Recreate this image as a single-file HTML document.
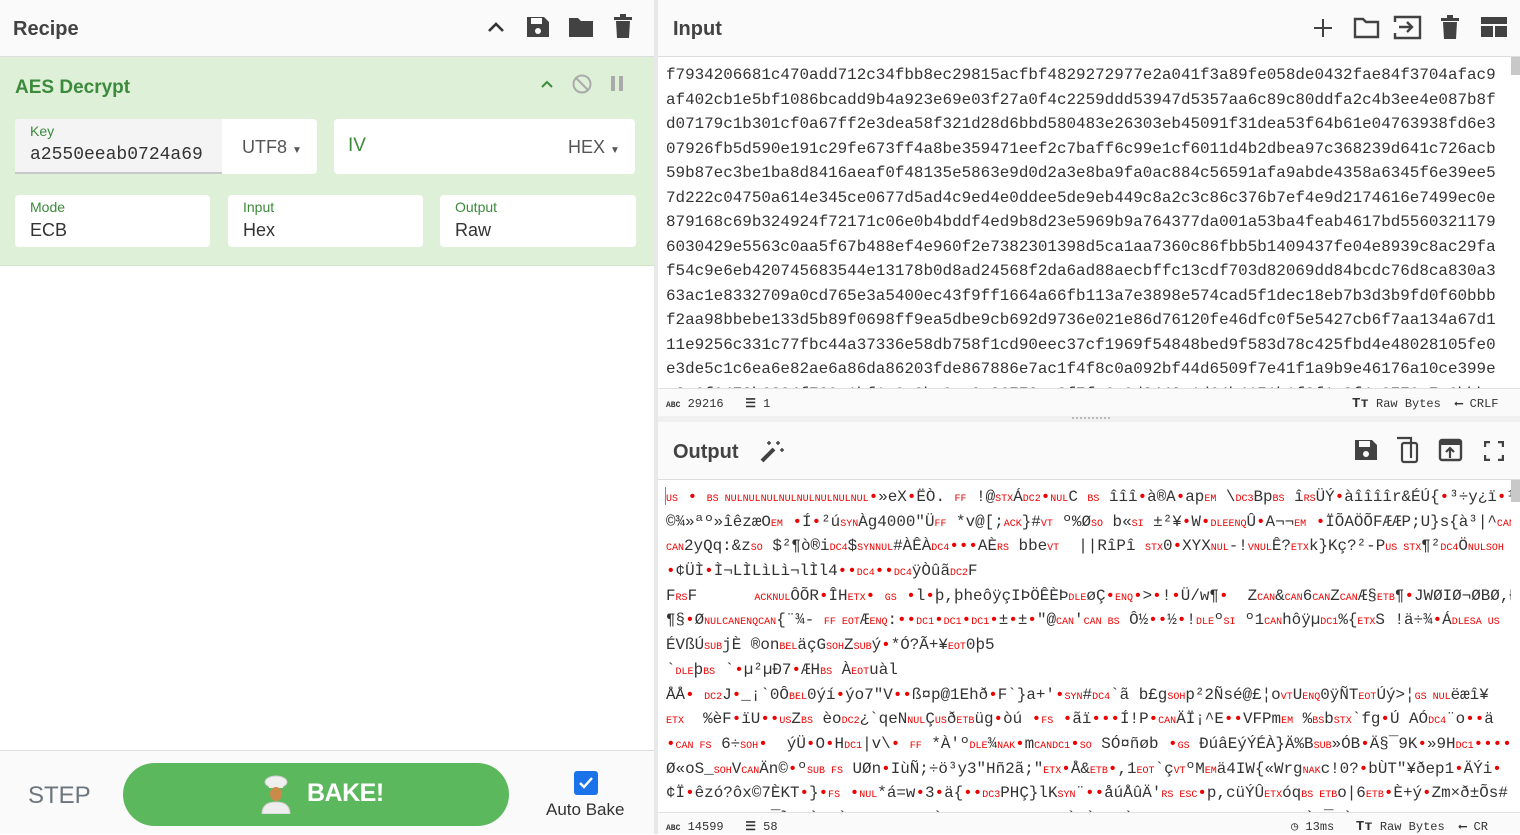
<!DOCTYPE html>
<html><head><meta charset="utf-8">
<style>
*{box-sizing:border-box;margin:0;padding:0}
body{width:1520px;height:834px;overflow:hidden;background:#fff;font-family:"Liberation Sans",sans-serif;color:#333;position:relative}
.abs{position:absolute}
.hdr{background:#fafafa;border-bottom:1px solid #ddd;height:57px}
.title{font-size:20px;font-weight:bold;color:#424242;position:absolute;top:18px}
.mono{font-family:"Liberation Mono","DejaVu Sans Mono",monospace}
.box{background:#fff;border-radius:4px;position:absolute}
.lbl{font-size:14px;color:#3c8a3c;position:absolute}
.val{font-size:18px;color:#333;position:absolute}
#in div{height:24.5px;white-space:pre;font-size:15.9px;color:#333}
#out div{height:24.7px;white-space:pre;font-size:15.9px;color:#333;overflow:hidden}
.c{color:#e00;font-size:10px}
.d{color:#e00}
.status{font-size:12px;color:#333;background:#fafafa;border-top:1px solid #e0e0e0}
</style></head><body>

<!-- LEFT -->
<div class="abs hdr" style="left:0;top:0;width:654px"></div>
<div class="title" style="left:13px">Recipe</div>
<svg class="abs" style="left:487px;top:20px" width="18" height="14"><path d="M2 11 L9 4 L16 11" stroke="#333" stroke-width="2.6" fill="none"/></svg>
<svg class="abs" style="left:526px;top:15px" width="24" height="24"><path d="M1 2h17l5 5v15H1z" fill="#424242"/><rect x="5" y="3" width="11" height="6" fill="#fafafa"/><circle cx="12" cy="16" r="3" fill="#fafafa"/></svg>
<svg class="abs" style="left:568px;top:16px" width="26" height="22"><path d="M1 2h9l3 3h12v16H1z" fill="#424242"/></svg>
<svg class="abs" style="left:614px;top:14px" width="18" height="25"><rect x="0" y="3" width="18" height="3" fill="#424242"/><rect x="6" y="0" width="6" height="3" fill="#424242"/><path d="M2 7h14l-1 17H3z" fill="#424242"/></svg>

<div class="abs" style="left:0;top:57px;width:654px;height:209px;background:#dff0d8;border-bottom:1px solid #cfe5c5"></div>
<div class="abs" style="left:15px;top:77px;font-size:19px;font-weight:bold;color:#3c8a3c">AES Decrypt</div>
<svg class="abs" style="left:540px;top:79px" width="14" height="10"><path d="M2 8 L7 3 L12 8" stroke="#3c8a3c" stroke-width="2" fill="none"/></svg>
<svg class="abs" style="left:571px;top:73px" width="22" height="22"><circle cx="11" cy="11" r="8.5" stroke="#aaa" stroke-width="2" fill="none"/><path d="M5 5 L17 17" stroke="#aaa" stroke-width="2"/></svg>
<div class="abs" style="left:611px;top:76px;width:4px;height:15px;background:#aaa"></div>
<div class="abs" style="left:619px;top:76px;width:4px;height:15px;background:#aaa"></div>

<div class="box" style="left:15px;top:119px;width:302px;height:55px"></div>
<div class="abs" style="left:15px;top:119px;width:207px;height:55px;background:#f4f4f4;border-bottom:2px solid #c8c8c8;border-radius:4px 0 0 0"></div>
<div class="lbl" style="left:30px;top:123px">Key</div>
<div class="val mono" style="left:30px;top:145px;font-size:18px">a2550eeab0724a69</div>
<div class="abs" style="left:242px;top:137px;font-size:18px;color:#555">UTF8 <span style="font-size:10px">▼</span></div>
<div class="box" style="left:334px;top:119px;width:301px;height:55px"></div>
<div class="abs" style="left:348px;top:135px;font-size:19px;color:#3c8a3c">IV</div>
<div class="abs" style="left:568px;top:137px;font-size:18px;color:#555">HEX <span style="font-size:10px">▼</span></div>

<div class="box" style="left:15px;top:195px;width:195px;height:52px"></div>
<div class="lbl" style="left:30px;top:199px">Mode</div><div class="val" style="left:30px;top:220px">ECB</div>
<div class="box" style="left:228px;top:195px;width:195px;height:52px"></div>
<div class="lbl" style="left:243px;top:199px">Input</div><div class="val" style="left:243px;top:220px">Hex</div>
<div class="box" style="left:440px;top:195px;width:196px;height:52px"></div>
<div class="lbl" style="left:455px;top:199px">Output</div><div class="val" style="left:455px;top:220px">Raw</div>

<div class="abs" style="left:0;top:750px;width:654px;height:84px;background:#fafafa;border-top:1px solid #ddd"></div>
<div class="abs" style="left:28px;top:782px;font-size:24px;color:#6c757d">STEP</div>
<div class="abs" style="left:123px;top:763px;width:386px;height:63px;border-radius:32px;background:#5cb85c"></div>
<svg class="abs" style="left:258px;top:774px" width="36" height="40"><ellipse cx="18" cy="8" rx="11" ry="6" fill="#f0f0f0" stroke="#ccc"/><rect x="11" y="9" width="14" height="5" fill="#eee"/><ellipse cx="18" cy="20" rx="6" ry="7" fill="#c98a4a"/><path d="M4 40 Q4 28 18 28 Q32 28 32 40z" fill="#eee" stroke="#ccc"/></svg>
<div class="abs" style="left:307px;top:779px;font-size:25px;font-weight:bold;color:#fff;letter-spacing:-0.5px">BAKE!</div>
<div class="abs" style="left:574px;top:771px;width:24px;height:24px;background:#1a73e8;border-radius:3px"></div>
<svg class="abs" style="left:574px;top:771px" width="24" height="24"><path d="M6 12 L10 16 L18 7" stroke="#fff" stroke-width="2.4" fill="none"/></svg>
<div class="abs" style="left:546px;top:800px;font-size:17px;color:#333">Auto Bake</div>

<div class="abs" style="left:654px;top:0;width:4px;height:834px;background:#e8e8e8"></div>

<!-- RIGHT INPUT -->
<div class="abs hdr" style="left:658px;top:0;width:862px"></div>
<div class="title" style="left:673px">Input</div>
<svg class="abs" style="left:1312px;top:17px" width="22" height="22"><path d="M11 2v18M2 11h18" stroke="#424242" stroke-width="2"/></svg>
<svg class="abs" style="left:1353px;top:17px" width="27" height="22"><path d="M2 2h8l3 3h12v15H2z" stroke="#424242" stroke-width="2.4" fill="none"/></svg>
<svg class="abs" style="left:1393px;top:15px" width="30" height="25"><path d="M2 7V2h25v21H2v-5" stroke="#424242" stroke-width="2.4" fill="none"/><path d="M6 12h13M14 7l5 5-5 5" stroke="#424242" stroke-width="2.4" fill="none"/></svg>
<svg class="abs" style="left:1441px;top:15px" width="18" height="25"><rect x="0" y="3" width="18" height="3" fill="#424242"/><rect x="6" y="0" width="6" height="3" fill="#424242"/><path d="M2 7h14l-1 17H3z" fill="#424242"/></svg>
<svg class="abs" style="left:1481px;top:17px" width="26" height="20"><rect x="0" y="0" width="26" height="7" fill="#424242"/><rect x="0" y="9" width="12" height="11" fill="#424242"/><rect x="14" y="9" width="12" height="11" fill="#424242"/></svg>
<div class="abs" style="left:1511px;top:57px;width:9px;height:18px;background:#c8c8c8"></div>

<div id="in" class="abs mono" style="left:666px;top:66px;width:845px;height:322px;overflow:hidden">
<div>f7934206681c470add712c34fbb8ec29815acfbf4829272977e2a041f3a89fe058de0432fae84f3704afac9</div>
<div>af402cb1e5bf1086bcadd9b4a923e69e03f27a0f4c2259ddd53947d5357aa6c89c80ddfa2c4b3ee4e087b8f</div>
<div>d07179c1b301cf0a67ff2e3dea58f321d28d6bbd580483e26303eb45091f31dea53f64b61e04763938fd6e3</div>
<div>07926fb5d590e191c29fe673ff4a8be359471eef2c7baff6c99e1cf6011d4b2dbea97c368239d641c726acb</div>
<div>59b87ec3be1ba8d8416aeaf0f48135e5863e9d0d2a3e8ba9fa0ac884c56591afa9abde4358a6345f6e39ee5</div>
<div>7d222c04750a614e345ce0677d5ad4c9ed4e0ddee5de9eb449c8a2c3c86c376b7ef4e9d2174616e7499ec0e</div>
<div>879168c69b324924f72171c06e0b4bddf4ed9b8d23e5969b9a764377da001a53ba4feab4617bd5560321179</div>
<div>6030429e5563c0aa5f67b488ef4e960f2e7382301398d5ca1aa7360c86fbb5b1409437fe04e8939c8ac29fa</div>
<div>f54c9e6eb420745683544e13178b0d8ad24568f2da6ad88aecbffc13cdf703d82069dd84bcdc76d8ca830a3</div>
<div>63ac1e8332709a0cd765e3a5400ec43f9ff1664a66fb113a7e3898e574cad5f1dec18eb7b3d3b9fd0f60bbb</div>
<div>f2aa98bbebe133d5b89f0698ff9ea5dbe9cb692d9736e021e86d76120fe46dfc0f5e5427cb6f7aa134a67d1</div>
<div>11e9256c331c77fbc44a37336e58db758f1cd90eec37cf1969f54848bed9f583d78c425fbd4e48028105fe0</div>
<div>e3de5c1c6ea6e82ae6a86da86203fde867886e7ac1f4f8c0a092bf44d6509f7e41f1a9b9e46176a10ce399e</div>
<div>e3a6f0473b6284f729a1bf1a0a2bc0ea8e36773ec8f7fe6c9d3443a1d64b4171b1f2f1a3f4a9770c7c6bbba</div>
</div>
<div class="abs status mono" style="left:658px;top:388px;width:862px;height:28px"></div>
<div class="abs mono" style="left:666px;top:396px;font-size:12px"><b style="font-size:8px">ABC</b> 29216 &nbsp; <b>☰</b> 1</div>
<div class="abs mono" style="left:1352px;top:396px;font-size:12px"><b style="font-size:14px">Tт</b> Raw Bytes &nbsp;<b>⟵</b> CRLF</div>
<div class="abs" style="left:658px;top:416px;width:862px;height:6px;background:#f0f0f0"></div>
<div class="abs" style="left:1072px;top:417px;width:38px;height:2px;border-top:2px dotted #bbb"></div>

<!-- OUTPUT -->
<div class="abs hdr" style="left:658px;top:422px;width:862px;height:58px"></div>
<div class="title" style="left:673px;top:441px">Output</div>
<svg class="abs" style="left:758px;top:438px" width="28" height="26"><path d="M4 23 L16 11" stroke="#424242" stroke-width="4"/><path d="M20 3v4M18 5h4M24 10v4M22 12h4M11 3v4M9 5h4" stroke="#424242" stroke-width="1.5"/></svg>
<svg class="abs" style="left:1354px;top:438px" width="24" height="24"><path d="M1 2h17l5 5v15H1z" fill="#424242"/><rect x="5" y="3" width="11" height="6" fill="#fafafa"/><circle cx="12" cy="16" r="3" fill="#fafafa"/></svg>
<svg class="abs" style="left:1395px;top:436px" width="26" height="28"><path d="M2 2h14v20" stroke="#424242" stroke-width="2.2" fill="none"/><rect x="7" y="7" width="15" height="19" rx="2" stroke="#424242" stroke-width="2.2" fill="none"/></svg>
<svg class="abs" style="left:1438px;top:438px" width="26" height="24"><rect x="2" y="2" width="21" height="20" rx="2" stroke="#424242" stroke-width="2.4" fill="none"/><rect x="2" y="2" width="21" height="5" fill="#424242"/><path d="M12 20v-9M8 14l4-4 4 4" stroke="#424242" stroke-width="2.2" fill="none"/></svg>
<svg class="abs" style="left:1484px;top:441px" width="20" height="20"><path d="M1 6V1h5M14 1h5v5M19 14v5h-5M6 19H1v-5" stroke="#424242" stroke-width="2.4" fill="none"/></svg>
<div class="abs" style="left:1511px;top:480px;width:9px;height:22px;background:#c8c8c8"></div>
<div class="abs" style="left:665px;top:487px;width:1px;height:18px;background:#888"></div>

<div id="out" class="abs mono" style="left:666px;top:488px;width:845px;height:324px;overflow:hidden">
<div><span class="c">US</span> <span class="d">•</span> <span class="c">BS NULNULNULNULNULNULNULNUL</span><span class="d">•</span>»eX<span class="d">•</span>ËÒ. <span class="c">FF</span> !@<span class="c">STX</span>Á<span class="c">DC2</span><span class="d">•</span><span class="c">NUL</span>C <span class="c">BS</span> îîî<span class="d">•</span>à®A<span class="d">•</span>ap<span class="c">EM</span> \<span class="c">DC3</span>Bp<span class="c">BS</span> î<span class="c">RS</span>ÜÝ<span class="d">•</span>àîîîîr&amp;ÉÚ{<span class="d">•</span>³÷y¿ï<span class="d">•</span>¹<span class="d">•</span></div>
<div>©¾»ªº»îêzæO<span class="c">EM</span> <span class="d">•</span>Í<span class="d">•</span>²ú<span class="c">SYN</span>Àg4000"Ü<span class="c">FF</span> *v@[;<span class="c">ACK</span>}#<span class="c">VT</span> º%Ø<span class="c">SO</span> b«<span class="c">SI</span> ±²¥<span class="d">•</span>W<span class="d">•</span><span class="c">DLEENQ</span>Û<span class="d">•</span>A¬¬<span class="c">EM</span> <span class="d">•</span>ÏÕAÖÕFÆÆP;U}s{à³|^<span class="c">CAN</span></div>
<div><span class="c">CAN</span>2yQq:&amp;z<span class="c">SO</span> $²¶ò®i<span class="c">DC4</span>$<span class="c">SYNNUL</span>#ÀÊÀ<span class="c">DC4</span><span class="d">•••</span>AÈ<span class="c">RS</span> bbe<span class="c">VT</span>  ||RîPî <span class="c">STX</span>0<span class="d">•</span>XYX<span class="c">NUL</span>-!<span class="c">VNUL</span>Ê?<span class="c">ETX</span>k}Kç?²-P<span class="c">US STX</span>¶²<span class="c">DC4</span>Ö<span class="c">NULSOH</span></div>
<div><span class="d">•</span>¢ÜÌ<span class="d">•</span>Ì¬LÌLìLì¬lÌl4<span class="d">••</span><span class="c">DC4</span><span class="d">••</span><span class="c">DC4</span>ÿÒûã<span class="c">DC2</span>F</div>
<div>F<span class="c">RS</span>F      <span class="c">ACKNUL</span>ÔÕR<span class="d">•</span>ÎH<span class="c">ETX</span><span class="d">•</span> <span class="c">GS</span> <span class="d">•</span>l<span class="d">•</span>þ,þheôÿçIÞÖÊÈÞ<span class="c">DLE</span>øÇ<span class="d">•</span><span class="c">ENQ</span><span class="d">•</span>&gt;<span class="d">•</span>!<span class="d">•</span>Ü/w¶<span class="d">•</span>  Z<span class="c">CAN</span>&amp;<span class="c">CAN</span>6<span class="c">CAN</span>Z<span class="c">CAN</span>Æ§<span class="c">ETB</span>¶<span class="d">•</span>JWØIØ¬ØBØ,Ð<span class="d">•</span></div>
<div>¶§<span class="d">•</span>Ø<span class="c">NULCANENQCAN</span>{¨¾- <span class="c">FF EOT</span>Æ<span class="c">ENQ</span>:<span class="d">••</span><span class="c">DC1</span><span class="d">•</span><span class="c">DC1</span><span class="d">•</span><span class="c">DC1</span><span class="d">•</span>±<span class="d">•</span>±<span class="d">•</span>"@<span class="c">CAN</span>'<span class="c">CAN BS</span> Ô½<span class="d">••</span>½<span class="d">•</span>!<span class="c">DLE</span>º<span class="c">SI</span> º1<span class="c">CAN</span>hôÿµ<span class="c">DC1</span>%{<span class="c">ETX</span>S !ä÷¾<span class="d">•</span>Á<span class="c">DLESA US</span></div>
<div>ÉVßÚ<span class="c">SUB</span>jÈ ®on<span class="c">BEL</span>äçG<span class="c">SOH</span>Z<span class="c">SUB</span>ý<span class="d">•</span>*Ó?Ã+¥<span class="c">EOT</span>0þ5</div>
<div>`<span class="c">DLE</span>þ<span class="c">BS</span> `<span class="d">•</span>µ²µÐ7<span class="d">•</span>ÆH<span class="c">BS</span> À<span class="c">EOT</span>uàl</div>
<div>ÅÅ<span class="d">•</span> <span class="c">DC2</span>J<span class="d">•</span>_¡`0Ô<span class="c">BEL</span>0ýí<span class="d">•</span>ýo7"V<span class="d">••</span>ß¤p@1Ehð<span class="d">•</span>F`}a+'<span class="d">•</span><span class="c">SYN</span>#<span class="c">DC4</span>`ã b£g<span class="c">SOH</span>p²2Ñsé@£¦o<span class="c">VT</span>U<span class="c">ENQ</span>0ÿÑT<span class="c">EOT</span>Úý&gt;¦<span class="c">GS NUL</span>ëæî¥</div>
<div><span class="c">ETX</span>  %èF<span class="d">•</span>ïU<span class="d">••</span><span class="c">US</span>Z<span class="c">BS</span> èo<span class="c">DC2</span>¿`qeN<span class="c">NUL</span>Ç<span class="c">US</span>ð<span class="c">ETB</span>üg<span class="d">•</span>òú <span class="d">•</span><span class="c">FS</span> <span class="d">•</span>ãï<span class="d">•••</span>Í!P<span class="d">•</span><span class="c">CAN</span>ÄÏ¡^E<span class="d">••</span>VFPm<span class="c">EM</span> %<span class="c">BS</span>b<span class="c">STX</span>`fg<span class="d">•</span>Ú AÓ<span class="c">DC4</span>¨o<span class="d">••</span>ä</div>
<div><span class="d">•</span><span class="c">CAN FS</span> 6÷<span class="c">SOH</span><span class="d">•</span>  ýÜ<span class="d">•</span>O<span class="d">•</span>H<span class="c">DC1</span>|v\<span class="d">•</span> <span class="c">FF</span> *À'º<span class="c">DLE</span>¾<span class="c">NAK</span><span class="d">•</span>m<span class="c">CANDC1</span><span class="d">•</span><span class="c">SO</span> SÓ¤ñøb <span class="d">•</span><span class="c">GS</span> ÐúâEýÝÉÀ}Ä%B<span class="c">SUB</span>»ÓB<span class="d">•</span>Ä§¯9K<span class="d">•</span>»9H<span class="c">DC1</span><span class="d">••••</span>Ï<span class="d">•</span></div>
<div>Ø«oS_<span class="c">SOH</span>V<span class="c">CAN</span>Än©<span class="d">•</span>º<span class="c">SUB FS</span> UØn<span class="d">•</span>IùÑ;÷ö³y3"Hñ2ã;"<span class="c">ETX</span><span class="d">•</span>Å&amp;<span class="c">ETB</span><span class="d">•</span>,1<span class="c">EOT</span>`ç<span class="c">VT</span>ºM<span class="c">EM</span>ä4IW{«Wrg<span class="c">NAK</span>c!0?<span class="d">•</span>bÙT"¥ðep1<span class="d">•</span>ÄÝi<span class="d">•</span></div>
<div>¢Ï<span class="d">•</span>êzó?ôx©7ÈKT<span class="d">•</span>}<span class="d">•</span><span class="c">FS</span> <span class="d">•</span><span class="c">NUL</span>*á=w<span class="d">•</span>3<span class="d">•</span>ä{<span class="d">••</span><span class="c">DC3</span>PHÇ}lK<span class="c">SYN</span>¨<span class="d">••</span>åúÅûÄ'<span class="c">RS ESC</span><span class="d">•</span>p,cüÝÛ<span class="c">ETX</span>óq<span class="c">BS ETB</span>o|6<span class="c">ETB</span><span class="d">•</span>È+ý<span class="d">•</span>Zm×ð±Õs#</div>
<div>  ·  ..  ~ ¯}  ` ·` .   ~ ~ ` ,  ·  ·. ·  ` ` ~ ` ·  ,  ·  ~ .   · ` ¯ ` </div>
</div>
<div class="abs status mono" style="left:658px;top:812px;width:862px;height:22px"></div>
<div class="abs mono" style="left:666px;top:819px;font-size:12px"><b style="font-size:8px">ABC</b> 14599 &nbsp; <b>☰</b> 58</div>
<div class="abs mono" style="left:1291px;top:819px;font-size:12px">◷ 13ms &nbsp; <b style="font-size:14px">Tт</b> Raw Bytes &nbsp;<b>⟵</b> CR</div>
</body></html>
